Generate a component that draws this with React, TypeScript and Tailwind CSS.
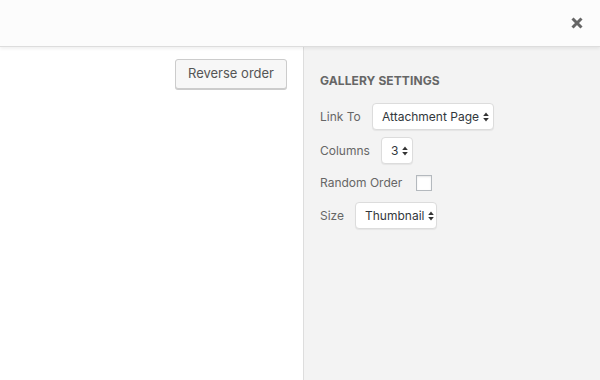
import React from "react";

function Arrows() {
  return (
    <svg width="6" height="10" viewBox="0 0 6 10" className="ml-[4px] shrink-0">
      <path d="M3 0.5 L5.8 4 L0.2 4 Z" fill="#333" />
      <path d="M3 9.5 L5.8 6 L0.2 6 Z" fill="#333" />
    </svg>
  );
}

function Select({ value, w }: { value: string; w: string }) {
  return (
    <div
      className={`flex h-[27px] ${w} items-center rounded-[4px] border border-[#dcdcdc] bg-white pl-[9px] pr-[4px] text-[12px] text-[#32373c] shadow-[0_1px_1px_rgba(0,0,0,0.06)]`}
    >
      <span className="flex-1 whitespace-nowrap">{value}</span>
      <Arrows />
    </div>
  );
}

export default function App() {
  return (
    <div
      className="flex h-[380px] w-[600px] flex-col overflow-hidden bg-white"
      style={{ fontFamily: "Inter, 'Noto Sans', sans-serif" }}
    >
      <div className="relative z-10 flex h-[47px] shrink-0 items-center justify-end border-b border-[#dddddd] bg-[#fcfcfc] pr-[17px] shadow-[0_2px_3px_rgba(0,0,0,0.06)]">
        <svg width="12" height="12" viewBox="0 0 12 12">
          <path
            d="M1.5 1.5 L10.5 10.5 M10.5 1.5 L1.5 10.5"
            stroke="#666"
            strokeWidth="3"
            strokeLinecap="butt"
          />
        </svg>
      </div>

      <div className="flex flex-1">
        <div className="flex flex-1 justify-end pr-[16px] pt-[12px]">
          <button className="h-[30px] rounded-[3px] border border-[#cccccc] bg-[#f7f7f7] px-[12px] text-[13px] text-[#555] shadow-[0_1px_0_#cccccc]">
            Reverse order
          </button>
        </div>

        <div className="w-[297px] border-l border-[#dddddd] bg-[#f3f3f3] px-[16px]">
          <h2 className="mt-[25px] text-[12px] font-bold uppercase tracking-[0.1px] text-[#666]">
            Gallery Settings
          </h2>

          <div className="mt-[13px] flex items-center">
            <span className="w-[52px] text-[12px] text-[#666]">Link To</span>
            <Select value="Attachment Page" w="w-[122px]" />
          </div>

          <div className="mt-[7px] flex items-center">
            <span className="w-[61px] text-[12px] text-[#666]">Columns</span>
            <Select value="3" w="w-[32px]" />
          </div>

          <div className="mt-[10px] flex items-center">
            <span className="w-[96px] text-[12px] text-[#666]">Random Order</span>
            <div className="h-[16px] w-[16px] border border-[#b4b9be] bg-white shadow-[inset_0_1px_2px_rgba(0,0,0,0.1)]" />
          </div>

          <div className="mt-[10px] flex items-center">
            <span className="w-[35px] text-[12px] text-[#666]">Size</span>
            <Select value="Thumbnail" w="w-[82px]" />
          </div>
        </div>
      </div>
    </div>
  );
}
